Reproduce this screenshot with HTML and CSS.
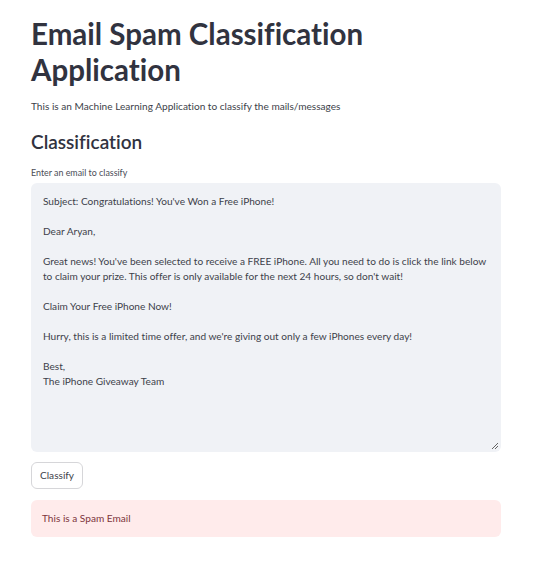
FILE: index.html
```html
<!DOCTYPE html>
<html>
<head>
<meta charset="utf-8">
<link rel="stylesheet" href="styles.css">
</head>
<body>
<main class="main">
  <h1 class="title">Email Spam Classification Application</h1>
  <p class="subtitle">This is an Machine Learning Application to classify the mails/messages</p>
  <h2 class="section">Classification</h2>
  <label class="label">Enter an email to classify</label>
  <div class="textarea">
    <p>Subject: Congratulations! You've Won a Free iPhone!</p>
    <p>Dear Aryan,</p>
    <p>Great news! You've been selected to receive a FREE iPhone. All you need to do is click the link below to claim your prize. This offer is only available for the next 24 hours, so don't wait!</p>
    <p>Claim Your Free iPhone Now!</p>
    <p>Hurry, this is a limited time offer, and we're giving out only a few iPhones every day!</p>
    <p>Best,<br>The iPhone Giveaway Team</p>
    <svg class="grip" width="8" height="8" viewBox="0 0 8 8"><path d="M7 1L1 7M7 4L4 7" stroke="#555" stroke-width="0.9"/></svg>
  </div>
  <button class="btn">Classify</button>
  <div class="alert">This is a Spam Email</div>
</main>
</body>
</html>
```
FILE: styles.css
```css
* { box-sizing: border-box; }
body {
  margin: 0;
  background: #fff;
  color: #31333f;
  font-family: Lato, "Liberation Sans", sans-serif;
  font-variant-ligatures: none;
}
.main {
  width: 470px;
  margin-left: 31px;
  padding-top: 16px;
  display: flex;
  flex-direction: column;
  align-items: flex-start;
}
.title {
  margin: 0;
  font-size: 29.5px;
  line-height: 36px;
  font-weight: 700;
  color: #31333f;
}
.subtitle {
  margin: 10px 0 0;
  font-size: 10.1px;
  line-height: 16px;
  color: #3d3f4a;
}
.section {
  margin: 15px 0 0;
  font-size: 19px;
  line-height: 26px;
  font-weight: 600;
}
.label {
  margin-top: 12px;
  font-size: 8.9px;
  line-height: 12px;
  color: #4a4c56;
}
.textarea {
  position: relative;
  margin-top: 4px;
  width: 470px;
  height: 269px;
  background: #f0f2f6;
  border-radius: 6px;
  padding: 11px 12px;
  font-size: 10.1px;
  line-height: 15px;
  color: #3d3f4a;
}
.textarea p {
  margin: 0 0 15px;
}
.grip {
  position: absolute;
  right: 2px;
  bottom: 2px;
}
.btn {
  margin-top: 10px;
  height: 27px;
  padding: 0 8px 1px;
  background: #fff;
  border: 1px solid #d6d6d9;
  border-radius: 6px;
  font-family: inherit;
  font-size: 10.1px;
  color: #3d3f4a;
}
.alert {
  margin-top: 11px;
  width: 470px;
  height: 37px;
  background: #ffebeb;
  border-radius: 6px;
  color: #7d353b;
  font-size: 10.1px;
  line-height: 36px;
  padding: 0 11px;
}
```
